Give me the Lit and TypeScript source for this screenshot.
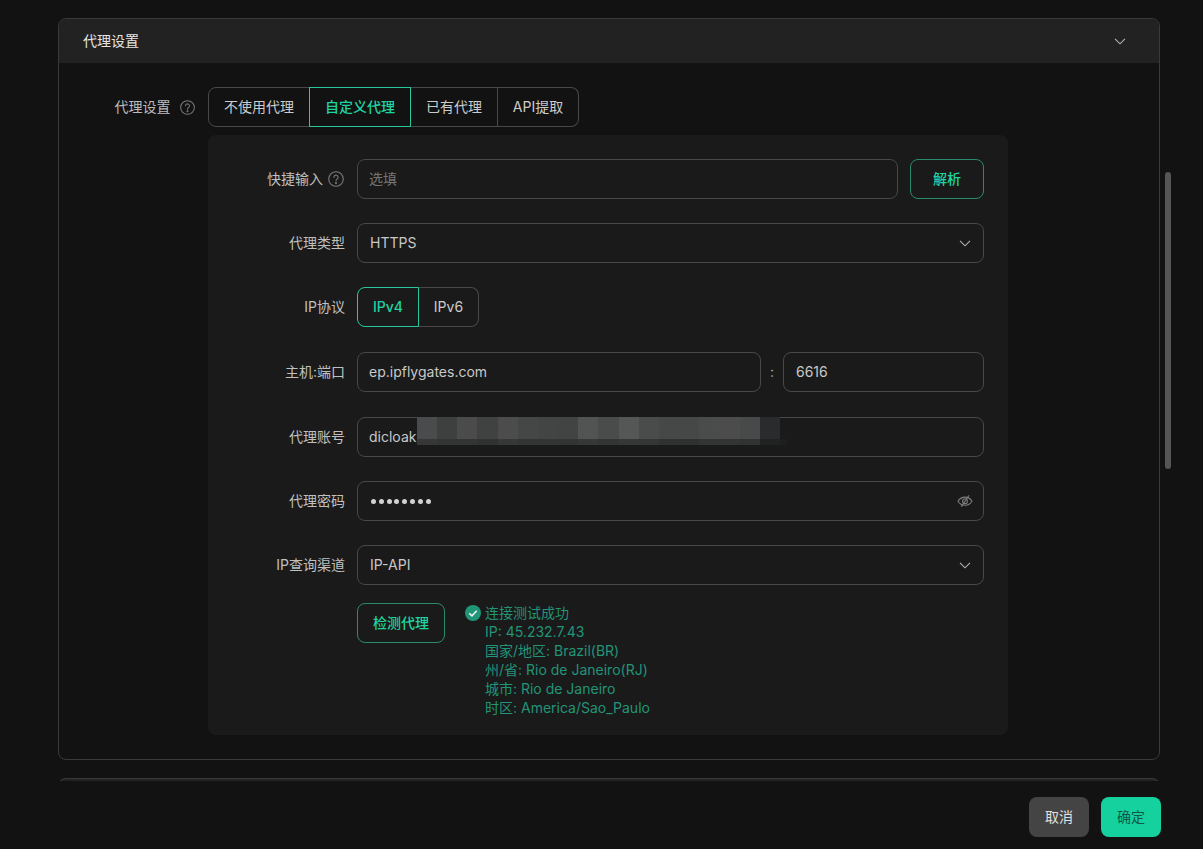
import { LitElement, html, css } from "lit";
import { customElement } from "lit/decorators.js";

const help = (size: number) => html`<svg class="help" width=${size} height=${size} viewBox="0 0 16 16" fill="none" stroke="currentColor" stroke-width="1.1" stroke-linecap="round"><circle cx="8" cy="8" r="7.3"/><path d="M5.9 6.2a2.1 2.1 0 1 1 3.4 1.7c-.8.6-1.300 1-1.300 1.900"/><circle cx="8" cy="12" r=".5" fill="currentColor"/></svg>`;
const chevron = html`<svg class="chev" width="12" height="12" viewBox="0 0 12 12" fill="none" stroke="currentColor" stroke-width="1.1"><path d="M1 3.900 6 8.800l5-4.900"/></svg>`;
const eyeOff = html`<svg class="eye" width="16" height="16" viewBox="0 0 16 16" fill="none" stroke="currentColor" stroke-width="1.1" stroke-linecap="round"><path d="M1 8.200C2.600 5.500 5.100 4.100 8 4.100s5.400 1.400 7 4.100c-1.600 2.700-4.100 4-7 4s-5.400-1.300-7-4Z"/><circle cx="8" cy="8.200" r="2.400"/><path d="M11.700 2.800 4.500 13.400"/></svg>`;

const pixelsTop = ["#4a4b4c","#3e3f3f","#4b4b4c","#404141","#4c4c4d","#454646","#434444","#424343","#525353","#4a4b4b","#555656","#4a4b4b","#464747","#464747","#4a4b4b","#4c4c4d","#484949","#2a2b2c"];
const pixelsBottom = ["#363737","#333434","#333434","#303131","#363737","#333434","#333434","#323333","#363737","#333434","#363737","#343535","#303131","#2f3030","#333434","#333434","#313232","#212222"];

@customElement("app-root")
export class AppRoot extends LitElement {
  static styles = css`
    :host { display: flex; flex-direction: column; position: relative; width: 1203px; height: 849px; overflow: hidden; background: #121212; color: #c4c4c4; font: 14px/20px Inter, "Noto Sans CJK SC", sans-serif; }
    * { box-sizing: border-box; }
    .scroll { height: 781px; flex: none; overflow: hidden; padding: 18px 43px 0 58px; }
    .card { border: 1px solid #3a3a3a; border-radius: 8px; height: 742px; overflow: hidden; }
    .card-head { height: 44px; background: #222222; display: flex; align-items: center; justify-content: space-between; padding: 0 33px 0 24px; color: #e6e6e6; margin-bottom: 24px; }
    .chev { display: block; color: #b4b4b4; }
    .top-row { display: flex; padding-left: 149px; }
    .top-label { width: 122px; height: 40px; margin-left: -122px; display: flex; align-items: center; justify-content: flex-end; gap: 9.500px; padding-right: 13px; color: #bcbcbc; }
    .help { color: #7a7a7a; flex: none; display: block; }
    .seg { display: flex; height: 40px; }
    .seg-item { height: 40px; border: 1px solid #484848; border-left-width: 0; display: flex; align-items: center; justify-content: center; color: #cccccc; }
    .seg-item:first-child { border-left-width: 1px; border-radius: 8px 0 0 8px; }
    .seg-item:last-child { border-radius: 0 8px 8px 0; }
    .seg-item.on { border: 1px solid #2ac79c; color: #1fd4a2; margin-left: -1px; font-weight: 500; }
    .seg-item.on:first-child { margin-left: 0; }
    .panel { width: 800px; height: 600px; margin: 8px 0 0 149px; padding: 24px; background: #1a1a1a; border-radius: 8px; display: flex; flex-direction: column; }
    .row { display: flex; align-items: center; height: 40px; margin-bottom: 24px; }
    .row.wide { margin-bottom: 25px; }
    .row.last { margin-bottom: 18px; }
    .label { width: 125px; flex: none; display: flex; justify-content: flex-end; align-items: center; gap: 5px; padding-right: 12px; color: #c0c0c0; white-space: nowrap; }
    .label.has-help { padding-right: 13px; }
    .field { flex: 1; min-width: 0; position: relative; height: 40px; border: 1px solid #484848; border-radius: 8px; display: flex; align-items: center; justify-content: space-between; padding: 0 12px; color: #c8c8c8; }
    .field.text { padding-left: 11px; }
    .field.ph { color: #757575; padding-left: 11px; }
    .btn { height: 40px; border: 1px solid #2a8a70; border-radius: 8px; color: #1fd4a2; display: flex; align-items: center; justify-content: center; flex: none; font-weight: 500; }
    .parse { width: 74px; margin-left: 12px; }
    .colon { width: 22px; text-align: center; flex: none; color: #a8a8a8; }
    .port { flex: none; width: 201px; }
    .eye { color: #7d7d7d; display: block; margin-right: -2px; }
    .dots { display: flex; gap: 2.800px; margin-left: 1px; }
    .dots i { width: 5px; height: 5px; border-radius: 50%; background: #d2d2d2; display: block; }
    .blur { position: absolute; left: 59px; top: -1px; display: grid; grid-template-rows: 22px 6px; pointer-events: none; }
    .blur-row { display: flex; }
    .blur-row i { display: block; width: 20.170px; flex: none; }
    .blur-row i.tail { width: 7px; background: #1e1e1e; }
    .test { display: flex; align-items: flex-start; padding-left: 125px; }
    .test .btn { width: 88px; }
    .result { display: flex; margin-left: 20px; color: #229478; line-height: 19px; }
    .ok { flex: none; display: block; margin: 2px 4px 0 0; }
    .lines div { white-space: nowrap; }
    .footer { height: 68px; flex: none; display: flex; justify-content: flex-end; gap: 12px; padding: 16px 42px 0 0; }
    .foot { width: 60px; height: 40px; border-radius: 8px; display: flex; align-items: center; justify-content: center; }
    .cancel { background: #444444; color: #e0e0e0; }
    .confirm { background: #15d19e; color: #0e5a46; }
    .second { height: 10px; margin-top: 18px; border: 1px solid #3a3a3a; border-bottom: 0; border-radius: 8px 8px 0 0; background: #222222; }
    .thumb { position: absolute; left: 1165px; top: 172px; width: 6px; height: 297px; border-radius: 3px; background: #555555; }
  `;

  render() {
    return html`
      <div class="scroll">
        <section class="card">
          <header class="card-head"><span>代理设置</span>${chevron}</header>
          <div class="top-row">
            <div class="top-label"><span>代理设置</span>${help(15)}</div>
            <div class="seg">
              <div class="seg-item" style="width:102px">不使用代理</div>
              <div class="seg-item on" style="width:102px">自定义代理</div>
              <div class="seg-item" style="width:87px">已有代理</div>
              <div class="seg-item" style="width:81px">API提取</div>
            </div>
          </div>
          <div class="panel">
            <div class="row">
              <div class="label has-help"><span>快捷输入</span>${help(16)}</div>
              <div class="field ph">选填</div>
              <div class="btn parse">解析</div>
            </div>
            <div class="row">
              <div class="label">代理类型</div>
              <div class="field"><span>HTTPS</span>${chevron}</div>
            </div>
            <div class="row wide">
              <div class="label">IP协议</div>
              <div class="seg">
                <div class="seg-item on" style="width:62px">IPv4</div>
                <div class="seg-item" style="width:60px">IPv6</div>
              </div>
            </div>
            <div class="row wide">
              <div class="label">主机:端口</div>
              <div class="field text">ep.ipflygates.com</div>
              <div class="colon">:</div>
              <div class="field port">6616</div>
            </div>
            <div class="row">
              <div class="label">代理账号</div>
              <div class="field text">
                <span>dicloak</span>
                <div class="blur">
                  <div class="blur-row">${pixelsTop.map((c) => html`<i style="background:${c}"></i>`)}</div>
                  <div class="blur-row">${pixelsBottom.map((c) => html`<i style="background:${c}"></i>`)}<i class="tail"></i></div>
                </div>
              </div>
            </div>
            <div class="row">
              <div class="label">代理密码</div>
              <div class="field"><span class="dots">${[...Array(8)].map(() => html`<i></i>`)}</span>${eyeOff}</div>
            </div>
            <div class="row last">
              <div class="label">IP查询渠道</div>
              <div class="field"><span>IP-API</span>${chevron}</div>
            </div>
            <div class="test">
              <div class="btn">检测代理</div>
              <div class="result">
                <svg class="ok" width="16" height="16" viewBox="0 0 16 16"><circle cx="8" cy="8" r="8" fill="#1e9677"/><path d="M4.300 8.300 7 10.800l4.700-5" fill="none" stroke="#f0f0f0" stroke-width="1.600"/></svg>
                <div class="lines">
                  <div>连接测试成功</div>
                  <div>IP: 45.232.7.43</div>
                  <div>国家/地区: Brazil(BR)</div>
                  <div>州/省: Rio de Janeiro(RJ)</div>
                  <div>城市: Rio de Janeiro</div>
                  <div>时区: America/Sao_Paulo</div>
                </div>
              </div>
            </div>
          </div>
        </section>
        <div class="second"></div>
      </div>
      <footer class="footer">
        <div class="foot cancel">取消</div>
        <div class="foot confirm">确定</div>
      </footer>
      <div class="thumb"></div>
    `;
  }
}
